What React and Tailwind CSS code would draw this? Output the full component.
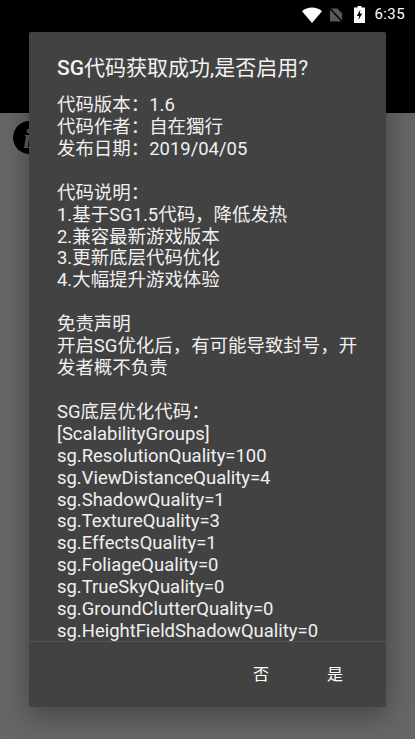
import React from 'react';

const lines = [
    '代码版本：1.6',
    '代码作者：自在獨行',
    '发布日期：2019/04/05',
    '',
    '代码说明：',
    '1.基于SG1.5代码，降低发热',
    '2.兼容最新游戏版本',
    '3.更新底层代码优化',
    '4.大幅提升游戏体验',
    '',
    '免责声明',
    '开启SG优化后，有可能导致封号，开发者概不负责',
    '',
    'SG底层优化代码：',
    '[ScalabilityGroups]',
    'sg.ResolutionQuality=100',
    'sg.ViewDistanceQuality=4',
    'sg.ShadowQuality=1',
    'sg.TextureQuality=3',
    'sg.EffectsQuality=1',
    'sg.FoliageQuality=0',
    'sg.TrueSkyQuality=0',
    'sg.GroundClutterQuality=0',
    'sg.HeightFieldShadowQuality=0',
];

const StatusBar = () => (
    <div className="flex items-center justify-end h-[29px] pr-[10px] text-[#fff]">
        {/* wifi */}
        <svg width="20" height="16" viewBox="0 0 20 16" className="mr-[7px]">
            <path d="M0 4.2C2.8 1.8 6.2 0.5 10 0.5s7.2 1.3 10 3.7L10 16z" fill="#fff" />
        </svg>
        {/* no sim */}
        <svg width="14" height="16" viewBox="0 0 15 16" className="mr-[11px]">
            <path d="M1 1h8l5 5v9H1z" fill="#5a5a5a" />
            <path d="M0.5 0.5L14.5 15.5" stroke="#000" strokeWidth="1.6" />
        </svg>
        {/* charging battery */}
        <svg width="11" height="17" viewBox="0 0 11 17" className="mr-[9px]">
            <path d="M3.5 0h4v1.6H11V17H0V1.6h3.5z" fill="#fff" />
            <path d="M6.4 3.5L2.8 10h2.3l-.6 4 3.7-6.4H5.9z" fill="#000" />
        </svg>
        <span className="text-[15px] font-['Roboto',sans-serif] tracking-[0.4px]">6:35</span>
    </div>
);

export default function App() {
    return (
        <div className="relative h-[739px] w-[415px] overflow-hidden bg-[#666666] font-['Roboto','Noto_Sans_CJK_SC',sans-serif]">
            <div className="h-[113px] bg-black">
                <StatusBar />
            </div>
            <div className="pl-[13px] pt-[8px]">
                <div className="flex h-[33px] w-[33px] items-center justify-center rounded-full bg-black pt-[3px] text-[27px] italic font-bold leading-none text-[#5e5e5e] font-['Liberation_Serif',serif]">
                    <span className="pr-[5px]">i</span>
                </div>
            </div>

            {/* dialog */}
            <div className="absolute left-[29px] top-[32px] flex h-[675px] w-[357px] flex-col rounded-[2px] bg-[#424242] shadow-[0_8px_28px_rgba(0,0,0,0.35)]">
                <h1 className="pl-[28px] pt-[22px] text-[21px] leading-[28px] font-normal text-[#f2f2f2]">
                    <span className="font-medium">SG</span>代码获取成功,是否启用?
                </h1>
                <div className="mt-[13px] min-h-0 flex-1 overflow-hidden border-b border-[#555555] pl-[28px] pr-[28px] text-[18.44px] leading-[21.92px] text-[#f0f0f0]">
                    {lines.map((line, i) => (
                        <div key={i} className="min-h-[21.92px]">{line}</div>
                    ))}
                </div>
                <div className="flex h-[65px] items-center justify-end text-[16px] text-white">
                    <button type="button" className="w-[74px] text-center">否</button>
                    <button type="button" className="mr-[14px] w-[74px] text-center">是</button>
                </div>
            </div>
        </div>
    );
}
